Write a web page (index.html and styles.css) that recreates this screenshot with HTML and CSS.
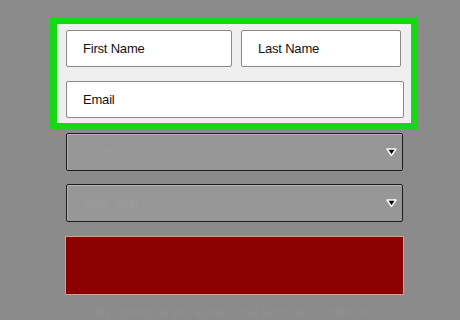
FILE: index.html
```html
<!DOCTYPE html>
<html lang="en">
<head>
    <meta charset="UTF-8">
    <meta name="viewport" content="width=device-width, initial-scale=1.0">
    <title>Sign Up</title>
    <link rel="stylesheet" href="styles.css">
</head>
<body>
    <div class="form">
        <div class="highlight">
            <div class="field">First Name</div>
            <div class="field last">Last Name</div>
            <div class="field wide">Email</div>
        </div>

        <div class="select first">
            <span>Position</span>
            <svg class="arrow" width="11" height="10" viewBox="0 0 11 10"><path d="M1 2 L10 2 L5.5 8.5 Z" fill="#000" stroke="#fff" stroke-width="1.5" stroke-linejoin="round"/></svg>
        </div>
        <div class="select">
            <span>Birth Year</span>
            <svg class="arrow" width="11" height="10" viewBox="0 0 11 10"><path d="M1 2 L10 2 L5.5 8.5 Z" fill="#000" stroke="#fff" stroke-width="1.5" stroke-linejoin="round"/></svg>
        </div>

        <div class="submit"></div>

        <p class="note">By signing up you agree to the terms and conditions</p>
    </div>
</body>
</html>
```

FILE: styles.css
```css
* {
    box-sizing: border-box;
}
body {
    margin: 0;
    background-color: #8b8b8b;
    font-family: "Liberation Sans", Arial, sans-serif;
    height: 320px;
    overflow: hidden;
}
.form {
    padding: 17px 0 0 50px;
    width: 418px;
}
.highlight {
    border: 7px solid #16d916;
    background-color: #efefef;
    padding: 6px 7px 5px 9px;
    display: grid;
    grid-template-columns: 166px 1fr;
    gap: 14px 9px;
}
.field {
    height: 37px;
    background-color: #fff;
    border: 1px solid #8a8a8a;
    border-radius: 2px;
    padding-left: 16px;
    display: flex;
    align-items: center;
    font-size: 13px;
    letter-spacing: -0.2px;
    color: #111;
}
.last {
    margin-right: 3px;
}
.wide {
    grid-column: span 2;
}
.select {
    margin: 13px 0 0 16px;
    width: 337px;
    height: 38px;
    background-color: #979797;
    border: 1px solid #1e1e1e;
    box-shadow: inset 1px 1px 0 #b5b5b5;
    border-radius: 2px;
    display: flex;
    align-items: center;
    justify-content: space-between;
    padding: 0 5px 0 16px;
    font-size: 13px;
    color: #9b9b9b;
}
.select.first {
    margin-top: 3px;
}
.submit {
    margin: 14px 0 0 15px;
    width: 339px;
    height: 59px;
    background-color: #8b0000;
    border: 1px solid #c9a77a;
}
.note {
    margin: 10px 0 0 16px;
    width: 337px;
    text-align: center;
    font-size: 12px;
    color: #8f8f8f;
}
```
